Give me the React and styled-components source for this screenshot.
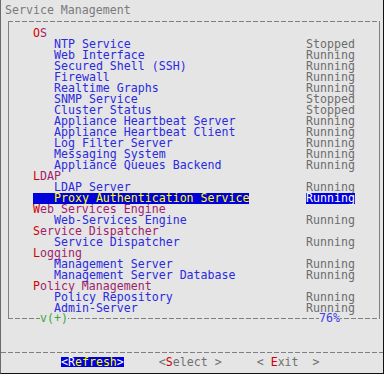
import React from 'react'
import styled, { createGlobalStyle } from 'styled-components'

const Global = createGlobalStyle`
  body {
    margin: 0;
    background: #e5e5e5;
  }
`

const dash = 'repeating-linear-gradient(90deg, #808080 0 5px, transparent 5px 7px)'

const Window = styled.div`
  width: 384px;
  height: 374px;
  box-sizing: border-box;
  background: #e5e5e5;
  border-left: 1px solid #6a6a6a;
  border-right: 1px solid #111;
  border-bottom: 1px solid #111;
  display: flex;
  flex-direction: column;
  font-family: "DejaVu Sans Mono", "Liberation Mono", monospace;
  font-size: 11.6px;
  line-height: 11px;
  white-space: pre;
`

const Title = styled.div`
  padding: 5px 0 0 4px;
  height: 11px;
  color: #7a7a7a;
`

const Box = styled.div`
  position: relative;
  margin: 5px 0 0 7px;
  width: 372px;
  height: 298px;
  box-sizing: border-box;
  border-left: 1px solid #808080;
  border-right: 1px solid #808080;
  padding: 7px 0 5px 0;
  background-image: ${dash}, ${dash};
  background-size: 100% 1px, 100% 1px;
  background-position: top left, bottom left;
  background-repeat: no-repeat;
  background-origin: border-box;
`

const Row = styled.div`
  display: flex;
  height: 11px;
  padding: 0 24px 0 24px;
`

const Category = styled.span`
  color: #a01f6e;
  &::first-letter {
    color: #d40000;
  }
`

const Item = styled.span`
  display: inline-block;
  height: 11px;
  padding-left: 21px;
  color: ${p => (p.$sel ? '#ffff00' : '#2a2ae0')};
  background: ${p => (p.$sel ? '#0000dc' : 'transparent')};
`

const Status = styled.span`
  margin-left: auto;
  width: 49px;
  height: 11px;
  color: ${p => (p.$sel ? '#ffffff' : '#6d6d6d')};
  background: ${p => (p.$sel ? '#0000dc' : 'transparent')};
`

const Mark = styled.span`
  position: absolute;
  bottom: -5px;
  left: ${p => p.$left}px;
  height: 11px;
  background: #e5e5e5;
  color: ${p => p.$color};
`

const Separator = styled.div`
  margin-top: 33px;
  height: 1px;
  background-image: ${dash};
`

const Buttons = styled.div`
  display: flex;
  gap: 35px;
  margin-top: 4px;
  padding-left: 60px;
  height: 10px;
  line-height: 10px;
`

const Button = styled.span`
  color: ${p => (p.$active ? '#ffffff' : '#707070')};
  background: ${p => (p.$active ? '#0000dc' : 'transparent')};
`

const Key = styled.span`
  color: ${p => (p.$active ? '#ffffff' : '#cc0000')};
`

const Label = styled.span`
  color: ${p => (p.$active ? '#ffff00' : '#707070')};
`

const tree = [
  ['OS', [
    ['NTP Service', 'Stopped'],
    ['Web Interface', 'Running'],
    ['Secured Shell (SSH)', 'Running'],
    ['Firewall', 'Running'],
    ['Realtime Graphs', 'Running'],
    ['SNMP Service', 'Stopped'],
    ['Cluster Status', 'Stopped'],
    ['Appliance Heartbeat Server', 'Running'],
    ['Appliance Heartbeat Client', 'Running'],
    ['Log Filter Server', 'Running'],
    ['Messaging System', 'Running'],
    ['Appliance Queues Backend', 'Running'],
  ]],
  ['LDAP', [
    ['LDAP Server', 'Running'],
    ['Proxy Authentication Service', 'Running', true],
  ]],
  ['Web Services Engine', [['Web-Services Engine', 'Running']]],
  ['Service Dispatcher', [['Service Dispatcher', 'Running']]],
  ['Logging', [
    ['Management Server', 'Running'],
    ['Management Server Database', 'Running'],
  ]],
  ['Policy Management', [
    ['Policy Repository', 'Running'],
    ['Admin-Server', 'Running'],
  ]],
]

const buttons = [
  { key: 'R', rest: 'efresh', pre: '<', post: '>', active: true },
  { key: 'S', rest: 'elect', pre: '<', post: ' >' },
  { key: 'E', rest: 'xit', pre: '< ', post: '  >' },
]

export default function App() {
  return (
    <Window>
      <Global />
      <Title>Service Management</Title>
      <Box>
        {tree.map(([cat, items]) => (
          <React.Fragment key={cat}>
            <Row><Category>{cat}</Category></Row>
            {items.map(([name, status, sel]) => (
              <Row key={name}>
                <Item $sel={sel}>{name}</Item>
                <Status $sel={sel}>{status}</Status>
              </Row>
            ))}
          </React.Fragment>
        ))}
        <Mark $left={31} $color="#3aa83a">v(+)</Mark>
        <Mark $left={310} $color="#4040e0">76%</Mark>
      </Box>
      <Separator />
      <Buttons>
        {buttons.map(b => (
          <Button key={b.key} $active={b.active}>
            {b.pre}<Key $active={b.active}>{b.key}</Key><Label $active={b.active}>{b.rest}</Label>{b.post}
          </Button>
        ))}
      </Buttons>
    </Window>
  )
}
